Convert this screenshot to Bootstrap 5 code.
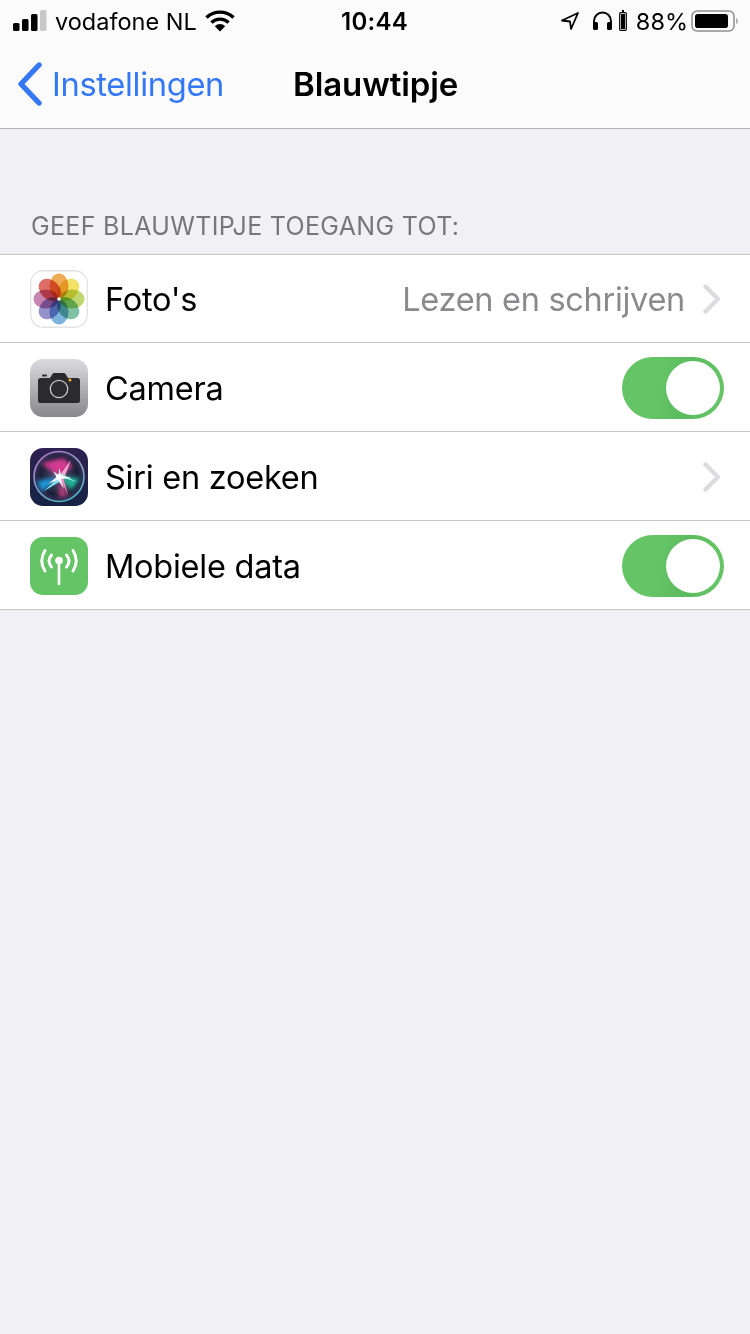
<!DOCTYPE html>
<html lang="nl">
<head>
<meta charset="utf-8">
<title>Blauwtipje</title>
<meta name="viewport" content="width=device-width, initial-scale=1">
<link href="https://cdn.jsdelivr.net/npm/bootstrap@5.3.0/dist/css/bootstrap.min.css" rel="stylesheet">
<style>
  body { background: #f0f0f5; font-family: Inter, "Liberation Sans", sans-serif; color: #000; min-height: 1334px; }
  .top-chrome { background: #fbfbfb; border-bottom: 1px solid #b4b4b6; height: 129px; padding: 0; display: block; }
  .status-strip { height: 41px; font-size: 23.5px; line-height: 41px; position: relative; }
  .status-strip span { padding-top: 1px; }
  .status-strip svg { flex: none; display: block; }
  .clock { position: absolute; left: 341px; top: 0; font-weight: 600; font-size: 24px; letter-spacing: .3px; }
  .nav-line { height: 87px; position: relative; }
  .back-link { color: #3478f6; font-size: 32.7px; text-decoration: none; letter-spacing: -.35px; }
  .nav-title { position: absolute; left: 293px; top: 50%; transform: translateY(-50%); font-size: 33px; font-weight: 600; letter-spacing: -.1px; margin: 0; }
  .group-caption { color: #76767b; font-size: 25px; padding: 82px 0 0 31px; height: 125px; line-height: 30px; letter-spacing: .32px; margin: 0; white-space: nowrap; }
  .settings-list { border-top: 1px solid #c6c6c8; border-bottom: 1px solid #c6c6c8; border-radius: 0; }
  .settings-list .list-group-item { height: 89px; padding: 2px 26px 0 30px; font-size: 32.5px; letter-spacing: -.25px; border-color: #c6c6c8; border-width: 0 0 1px; color: #000; }
  .settings-list .list-group-item:first-child { height: 88px; padding-top: 1px; }
  .settings-list .list-group-item:last-child { height: 88px; border-bottom-width: 0; }
  .app-tile { width: 58px; height: 58px; flex: none; display: block; margin-right: 17px; }
  .row-label, .row-value { padding-top: 2px; }
  .row-value { color: #8a8a8e; margin-left: auto; letter-spacing: -.3px; }
  .chevron-mark { flex: none; margin: 0 3px 0 18px; display: block; }
  .form-switch.ios-toggle { padding: 0; margin: 0 0 0 auto; min-height: 0; height: 62px; }
  .form-switch.ios-toggle .form-check-input { width: 102px; height: 62px; margin: 0; float: none; display: block; border: 0; border-radius: 31px; opacity: 1;
    background-color: #65c466;
    background-image: url("data:image/svg+xml,%3csvg xmlns='http://www.w3.org/2000/svg' viewBox='-4 -4 8 8'%3e%3ccircle r='3.48' fill='%23fff'/%3e%3c/svg%3e"), linear-gradient(100deg, #65c466 35%, #5cbb5e 62%, #65c466 90%);
    background-position: right center, 0 0; background-size: 62px 62px, 100% 100%; background-repeat: no-repeat; }
  .petal { mix-blend-mode: multiply; }
</style>
</head>
<body>
<nav class="navbar top-chrome">
  <div class="status-strip d-flex align-items-center">
    <svg style="margin-left:13px" width="34" height="26" viewBox="0 0 34 26" aria-hidden="true">
      <rect x="0" y="15" width="6.500" height="8" rx="1.500" fill="#000"/>
      <rect x="9" y="11" width="6.500" height="12" rx="1.500" fill="#000"/>
      <rect x="18" y="6" width="6.500" height="17" rx="1.500" fill="#000"/>
      <rect x="27" y="2" width="6.500" height="21" rx="1.500" fill="#c8c8c8"/>
    </svg>
    <span class="carrier ms-2">vodafone NL</span>
    <svg class="ms-2" width="30" height="22" viewBox="0 0 30 22" aria-hidden="true">
      <path d="M1.500 7.600 A19.500 19.500 0 0 1 28.500 7.600" fill="none" stroke="#000" stroke-width="3.400"/>
      <path d="M6.400 12.600 A12.500 12.500 0 0 1 23.600 12.600" fill="none" stroke="#000" stroke-width="3.400"/>
      <path d="M15 21.500 L9.800 16.200 A7.400 7.400 0 0 1 20.200 16.200 Z" fill="#000"/>
    </svg>
    <span class="clock">10:44</span>
    <div class="ms-auto d-flex align-items-center">
      <svg width="20" height="20" viewBox="0 0 20 20" aria-hidden="true">
        <path d="M18 2 L2 9.500 L10 10.500 L11 18 Z" fill="none" stroke="#000" stroke-width="1.800" stroke-linejoin="round"/>
      </svg>
      <svg style="margin-left:12px" width="21" height="20" viewBox="0 0 21 20" aria-hidden="true">
        <path d="M2 13 V10 A8.500 8.500 0 0 1 19 10 V13" fill="none" stroke="#000" stroke-width="1.900"/>
        <rect x="1" y="11" width="5" height="8" rx="1.600" fill="#000"/>
        <rect x="15" y="11" width="5" height="8" rx="1.600" fill="#000"/>
      </svg>
      <svg style="margin-left:6px" width="8" height="21" viewBox="0 0 8 21" aria-hidden="true">
        <rect x="3" y="0" width="2" height="2" fill="#000"/>
        <rect x=".7" y="2.700" width="6.600" height="17.600" rx="1" fill="none" stroke="#000" stroke-width="1.200"/>
        <rect x="2" y="4" width="4" height="15" fill="#000"/>
      </svg>
      <span style="margin-left:9px">88%</span>
      <svg style="margin:0 11px 0 3px" width="48" height="24" viewBox="0 0 48 24" aria-hidden="true">
        <rect x="1" y="2" width="42" height="20" rx="5" fill="none" stroke="#8f8f8f" stroke-width="1.500"/>
        <rect x="4" y="5" width="33" height="14" rx="2.800" fill="#000"/>
        <path d="M45 9 a3.200 3.200 0 0 1 0 6 Z" fill="#b0b0b0"/>
      </svg>
    </div>
  </div>
  <div class="nav-line d-flex align-items-center">
    <a class="back-link d-flex align-items-center" href="#">
      <svg style="margin:0 9px 0 17px" width="26" height="44" viewBox="0 0 26 44" aria-hidden="true">
        <path d="M22 3 L4 22 L22 41" fill="none" stroke="#3478f6" stroke-width="5.400" stroke-linecap="round" stroke-linejoin="round"/>
      </svg>Instellingen</a>
    <h1 class="nav-title">Blauwtipje</h1>
  </div>
</nav>

<p class="group-caption">GEEF BLAUWTIPJE TOEGANG TOT:</p>

<ul class="list-group list-group-flush settings-list">
  <li class="list-group-item d-flex align-items-center">
    <svg class="app-tile" viewBox="0 0 58 58" aria-hidden="true">
      <rect x=".75" y=".75" width="56.500" height="56.500" rx="12.500" fill="#fff" stroke="#e2e2e2" stroke-width="1.300"/>
      <g transform="translate(29 29)">
        <ellipse class="petal" cy="-13" rx="9.500" ry="12.500" fill="#f0ab55"/>
        <ellipse class="petal" cy="-13" rx="9.500" ry="12.500" fill="#f3e267" transform="rotate(45)"/>
        <ellipse class="petal" cy="-13" rx="9.500" ry="12.500" fill="#c0d771" transform="rotate(90)"/>
        <ellipse class="petal" cy="-13" rx="9.500" ry="12.500" fill="#81c2a6" transform="rotate(135)"/>
        <ellipse class="petal" cy="-13" rx="9.500" ry="12.500" fill="#7db2dc" transform="rotate(180)"/>
        <ellipse class="petal" cy="-13" rx="9.500" ry="12.500" fill="#9791c9" transform="rotate(225)"/>
        <ellipse class="petal" cy="-13" rx="9.500" ry="12.500" fill="#c985b1" transform="rotate(270)"/>
        <ellipse class="petal" cy="-13" rx="9.500" ry="12.500" fill="#de6d68" transform="rotate(315)"/>
        <circle r="1.800" fill="#fff"/>
      </g>
    </svg>
    <span class="row-label">Foto's</span>
    <span class="row-value">Lezen en schrijven</span>
    <svg class="chevron-mark" width="18" height="30" viewBox="0 0 18 30" aria-hidden="true">
      <path d="M2.500 2.500 L15 15 L2.500 27.500" fill="none" stroke="#dcdcdf" stroke-width="4.400" stroke-linecap="round" stroke-linejoin="round"/>
    </svg>
  </li>
  <li class="list-group-item d-flex align-items-center">
    <svg class="app-tile" viewBox="0 0 58 58" aria-hidden="true">
      <defs>
        <linearGradient id="lensBody" x1="0" y1="0" x2="0" y2="1">
          <stop offset="0" stop-color="#dcdce0"/><stop offset="1" stop-color="#87878b"/>
        </linearGradient>
      </defs>
      <rect width="58" height="58" rx="13" fill="url(#lensBody)"/>
      <path d="M10.500 19 H20 L22.500 15 a2 2 0 0 1 1.700-1 H33.800 a2 2 0 0 1 1.700 1 L38 19 H47.500 a2.500 2.500 0 0 1 2.500 2.500 V41.500 a2.500 2.500 0 0 1-2.500 2.500 H10.500 a2.500 2.500 0 0 1-2.500-2.500 V21.500 a2.500 2.500 0 0 1 2.500-2.500Z" fill="#2b2b2d"/>
      <rect x="12" y="15.500" width="5" height="2" rx="1" fill="#2b2b2d"/>
      <circle cx="29" cy="30" r="8.700" fill="none" stroke="#c4c4c6" stroke-width="1.300"/>
      <circle cx="40" cy="21" r="1.500" fill="#f3b72e"/>
    </svg>
    <span class="row-label">Camera</span>
    <div class="form-check form-switch ios-toggle">
      <input class="form-check-input" type="checkbox" role="switch" aria-label="Camera" checked>
    </div>
  </li>
  <li class="list-group-item d-flex align-items-center">
    <svg class="app-tile" viewBox="0 0 58 58" aria-hidden="true">
      <defs>
        <linearGradient id="siriBack" x1="0" y1="0" x2="0" y2="1">
          <stop offset="0" stop-color="#2e2150"/><stop offset="1" stop-color="#172344"/>
        </linearGradient>
        <radialGradient id="siriGlobe">
          <stop offset="0" stop-color="#4a5270"/><stop offset=".75" stop-color="#1d1f38"/><stop offset="1" stop-color="#32335a"/>
        </radialGradient>
        <linearGradient id="siriRing" x1=".2" y1="0" x2=".7" y2="1">
          <stop offset="0" stop-color="#b178c9"/><stop offset=".55" stop-color="#8a9dbf"/><stop offset="1" stop-color="#49b5c4"/>
        </linearGradient>
        <filter id="siriSoft"><feGaussianBlur stdDeviation=".7"/></filter>
        <filter id="siriGlow"><feGaussianBlur stdDeviation="2.200"/></filter>
      </defs>
      <rect width="58" height="58" rx="13" fill="url(#siriBack)"/>
      <circle cx="29" cy="28.500" r="25" fill="url(#siriGlobe)" stroke="url(#siriRing)" stroke-width="1.600"/>
      <g filter="url(#siriGlow)">
        <path d="M29 29 L11 15 L33 10 L43 18Z" fill="#d13a90"/>
        <path d="M29 29 L50 30 L42 42Z" fill="#1fb79b"/>
        <path d="M29 29 L12 44 L7 33Z" fill="#1f9be0"/>
        <path d="M29 29 L38 48 L29 49Z" fill="#b9407f"/>
      </g>
      <g filter="url(#siriSoft)">
        <path d="M30 27 L41 12 L34 30Z" fill="#f3a8cf"/>
        <path d="M28 30 L14 43 L31 33Z" fill="#7fe0f2"/>
        <path d="M30 29 L47 34 L32 26Z" fill="#8df0dc"/>
        <path d="M30 30 L38 47 L33 29Z" fill="#ee8fc0"/>
      </g>
      <path d="M29.500 20 L31 27 L41 30 L31 31 L34 41 L28 32 L18 36 L26.500 29 L23 23 L28.500 27Z" fill="#f4f8fc" opacity=".95" filter="url(#siriSoft)"/>
      <circle cx="29" cy="29" r="2.800" fill="#fff"/>
    </svg>
    <span class="row-label">Siri en zoeken</span>
    <svg class="chevron-mark ms-auto" width="18" height="30" viewBox="0 0 18 30" aria-hidden="true">
      <path d="M2.500 2.500 L15 15 L2.500 27.500" fill="none" stroke="#dcdcdf" stroke-width="4.400" stroke-linecap="round" stroke-linejoin="round"/>
    </svg>
  </li>
  <li class="list-group-item d-flex align-items-center">
    <svg class="app-tile" viewBox="0 0 58 58" aria-hidden="true">
      <rect width="58" height="58" rx="13" fill="#65c466"/>
      <circle cx="29" cy="23.500" r="3.800" fill="#fff"/>
      <path d="M29 25 V47" stroke="#fff" stroke-width="2.600" stroke-linecap="round"/>
      <path d="M21.500 18 Q16.500 24 21.500 30 M36.500 18 Q41.500 24 36.500 30" fill="none" stroke="#fff" stroke-width="3" stroke-linecap="round"/>
      <path d="M15 13.500 Q8.500 24 15 34 M43 13.500 Q49.500 24 43 34" fill="none" stroke="#fff" stroke-width="3" stroke-linecap="round"/>
    </svg>
    <span class="row-label">Mobiele data</span>
    <div class="form-check form-switch ios-toggle">
      <input class="form-check-input" type="checkbox" role="switch" aria-label="Mobiele data" checked>
    </div>
  </li>
</ul>
<script src="https://cdn.jsdelivr.net/npm/bootstrap@5.3.0/dist/js/bootstrap.bundle.min.js"></script>
</body>
</html>
